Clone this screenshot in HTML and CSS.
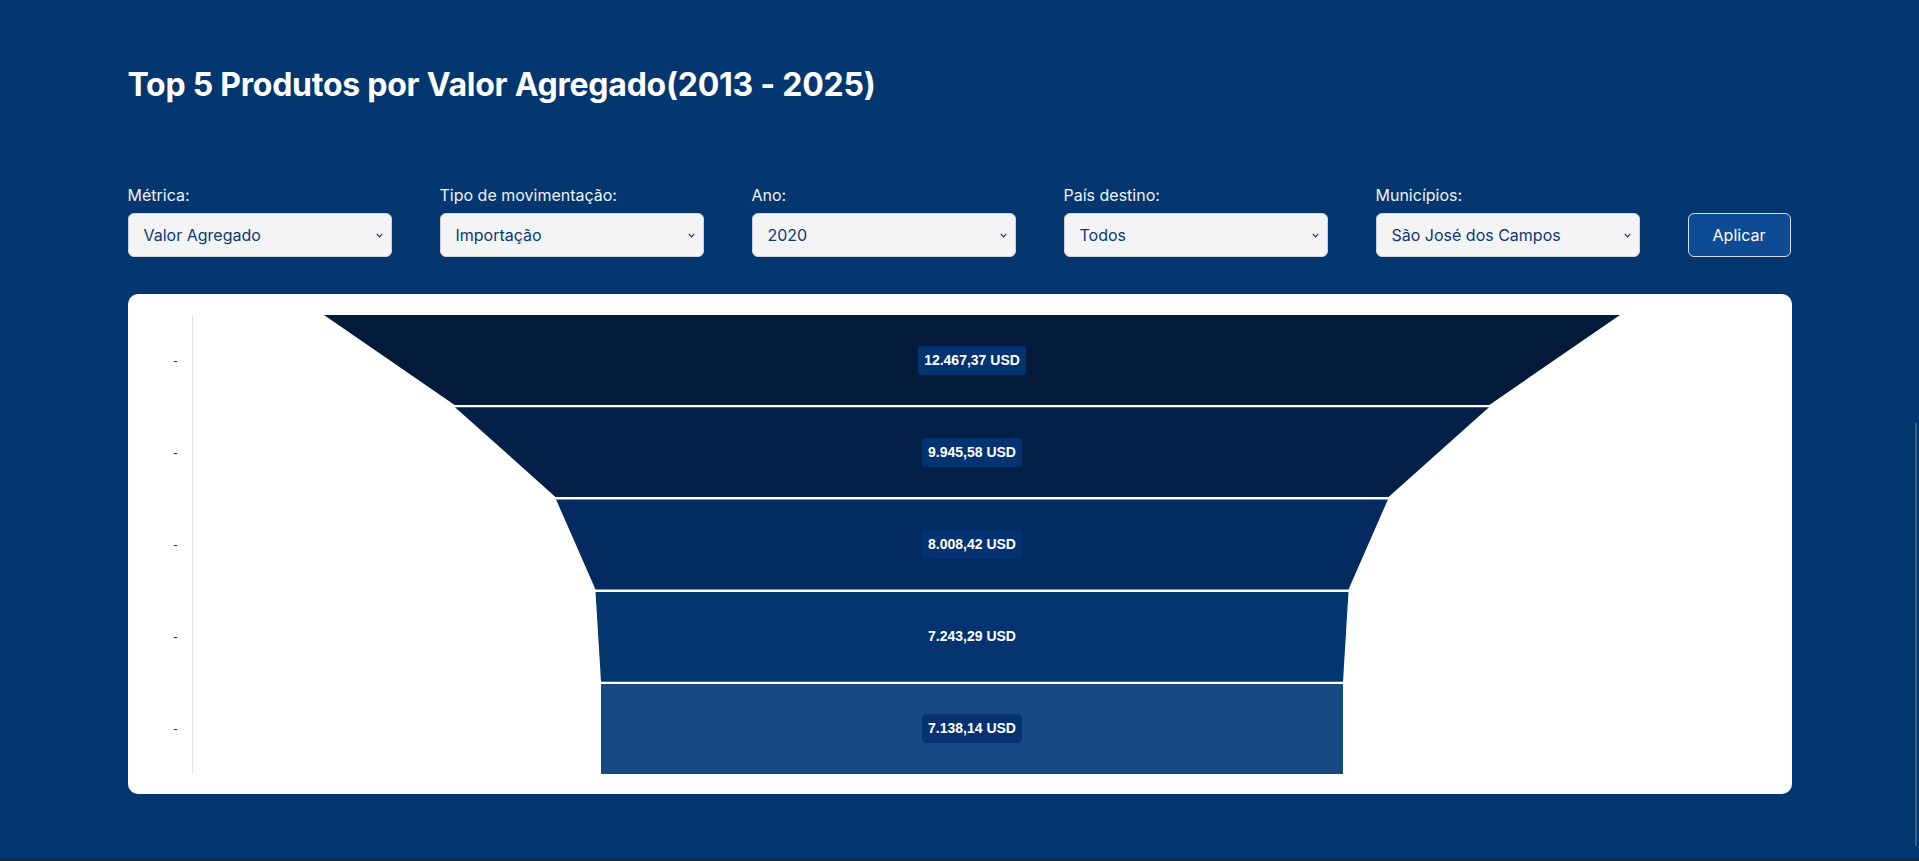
FILE: index.html
```html
<!DOCTYPE html>
<html lang="pt-BR">
<head>
<meta charset="utf-8">
<title>Top 5 Produtos por Valor Agregado</title>
<link rel="stylesheet" href="styles.css">
</head>
<body>
<main class="page">
  <h1 class="title">Top 5 Produtos por Valor Agregado(2013 - 2025)</h1>

  <form class="filters">
    <div class="field">
      <label class="field-label">Métrica:</label>
      <div class="select"><span>Valor Agregado</span><svg class="chev" width="7" height="5" viewBox="0 0 7 5"><path d="M0.8 0.8 L3.5 3.8 L6.2 0.8" fill="none" stroke="#1b2f4d" stroke-width="1.2"/></svg></div>
    </div>
    <div class="field">
      <label class="field-label">Tipo de movimentação:</label>
      <div class="select"><span>Importação</span><svg class="chev" width="7" height="5" viewBox="0 0 7 5"><path d="M0.8 0.8 L3.5 3.8 L6.2 0.8" fill="none" stroke="#1b2f4d" stroke-width="1.2"/></svg></div>
    </div>
    <div class="field">
      <label class="field-label">Ano:</label>
      <div class="select"><span>2020</span><svg class="chev" width="7" height="5" viewBox="0 0 7 5"><path d="M0.8 0.8 L3.5 3.8 L6.2 0.8" fill="none" stroke="#1b2f4d" stroke-width="1.2"/></svg></div>
    </div>
    <div class="field">
      <label class="field-label">País destino:</label>
      <div class="select"><span>Todos</span><svg class="chev" width="7" height="5" viewBox="0 0 7 5"><path d="M0.8 0.8 L3.5 3.8 L6.2 0.8" fill="none" stroke="#1b2f4d" stroke-width="1.2"/></svg></div>
    </div>
    <div class="field">
      <label class="field-label">Municípios:</label>
      <div class="select"><span>São José dos Campos</span><svg class="chev" width="7" height="5" viewBox="0 0 7 5"><path d="M0.8 0.8 L3.5 3.8 L6.2 0.8" fill="none" stroke="#1b2f4d" stroke-width="1.2"/></svg></div>
    </div>
    <button type="button" class="apply">Aplicar</button>
  </form>

  <section class="card">
    <div class="chart">
      <div class="y-labels">
        <div class="y-tick">-</div>
        <div class="y-tick">-</div>
        <div class="y-tick">-</div>
        <div class="y-tick">-</div>
        <div class="y-tick">-</div>
      </div>
      <div class="funnel">
        <div class="seg seg-1" style="clip-path: polygon(calc(50% - 648px) 0, calc(50% + 648px) 0, calc(50% + 517px) 100%, calc(50% - 517px) 100%);"><span class="val">12.467,37 USD</span></div>
        <div class="seg seg-2" style="clip-path: polygon(calc(50% - 517px) 0, calc(50% + 517px) 0, calc(50% + 416px) 100%, calc(50% - 416px) 100%);"><span class="val">9.945,58 USD</span></div>
        <div class="seg seg-3" style="clip-path: polygon(calc(50% - 416px) 0, calc(50% + 416px) 0, calc(50% + 376.5px) 100%, calc(50% - 376.5px) 100%);"><span class="val">8.008,42 USD</span></div>
        <div class="seg seg-4" style="clip-path: polygon(calc(50% - 376.5px) 0, calc(50% + 376.5px) 0, calc(50% + 371px) 100%, calc(50% - 371px) 100%);"><span class="val">7.243,29 USD</span></div>
        <div class="seg seg-5" style="clip-path: polygon(calc(50% - 371px) 0, calc(50% + 371px) 0, calc(50% + 371px) 100%, calc(50% - 371px) 100%);"><span class="val">7.138,14 USD</span></div>
      </div>
    </div>
  </section>
</main>
<div class="scroll-thumb"></div>
</body>
</html>
```

FILE: styles.css
```css
* { box-sizing: border-box; }

html, body {
  margin: 0;
  padding: 0;
}

body {
  background: #262626;
  font-family: Inter, "Noto Sans", Roboto, sans-serif;
  color: #ffffff;
}

.page {
  height: 859px;
  background: #04366f;
  padding-top: 65px;
}

.title,
.filters,
.card {
  width: 1664px;
  margin-left: auto;
  margin-right: auto;
}

.title {
  margin-top: 0;
  margin-bottom: 0;
  font-size: 32px;
  line-height: 40px;
  font-weight: 700;
  letter-spacing: -0.25px;
  color: #ffffff;
}

.filters {
  margin-top: 80px;
  display: flex;
  align-items: flex-end;
  gap: 48px;
}

.field {
  width: 264px;
  display: flex;
  flex-direction: column;
  gap: 8px;
}

.field-label {
  font-size: 16px;
  line-height: 20px;
  color: #eef2f7;
}

.select {
  height: 44px;
  background: #f4f4f4;
  border: 1px solid #cfd4da;
  border-radius: 6px;
  padding: 0 8px 0 15px;
  display: flex;
  align-items: center;
  justify-content: space-between;
  color: #0b3a75;
  font-size: 16px;
}

.chev {
  display: block;
  margin-top: 1px;
}

.apply {
  width: 103px;
  height: 44px;
  background: #0d4c95;
  color: #ffffff;
  border: 1px solid #d4dde8;
  border-radius: 6px;
  font-family: inherit;
  font-size: 16px;
  padding: 0;
}

.card {
  margin-top: 37px;
  height: 500px;
  background: #ffffff;
  border-radius: 10px;
  padding: 21px 40px 20px 0;
}

.chart {
  display: flex;
  height: 459px;
}

.y-labels {
  width: 64px;
  display: flex;
  flex-direction: column;
  gap: 2px;
}

.y-tick {
  height: 90.2px;
  display: flex;
  align-items: center;
  justify-content: flex-end;
  padding-right: 14px;
  font-family: "Liberation Sans", Arial, sans-serif;
  font-size: 13px;
  color: #222;
}

.funnel {
  flex: 1;
  border-left: 1px solid #e3e3e3;
  display: flex;
  flex-direction: column;
  gap: 2px;
}

.seg {
  height: 90.2px;
  display: flex;
  align-items: center;
  justify-content: center;
}

.seg-1 { background: #031a3a; }
.seg-2 { background: #032049; }
.seg-3 { background: #042b5f; }
.seg-4 { background: #04366f; }
.seg-5 { background: #174a82; }

.val {
  background: #053270;
  color: #ffffff;
  font-family: "Liberation Sans", Arial, sans-serif;
  font-weight: 700;
  font-size: 14px;
  line-height: 17px;
  padding: 6px 6px;
  border-radius: 4px;
}

.scroll-thumb {
  position: absolute;
  top: 423px;
  left: 1915px;
  width: 2px;
  height: 423px;
  background: #3d5f8c;
}
```
